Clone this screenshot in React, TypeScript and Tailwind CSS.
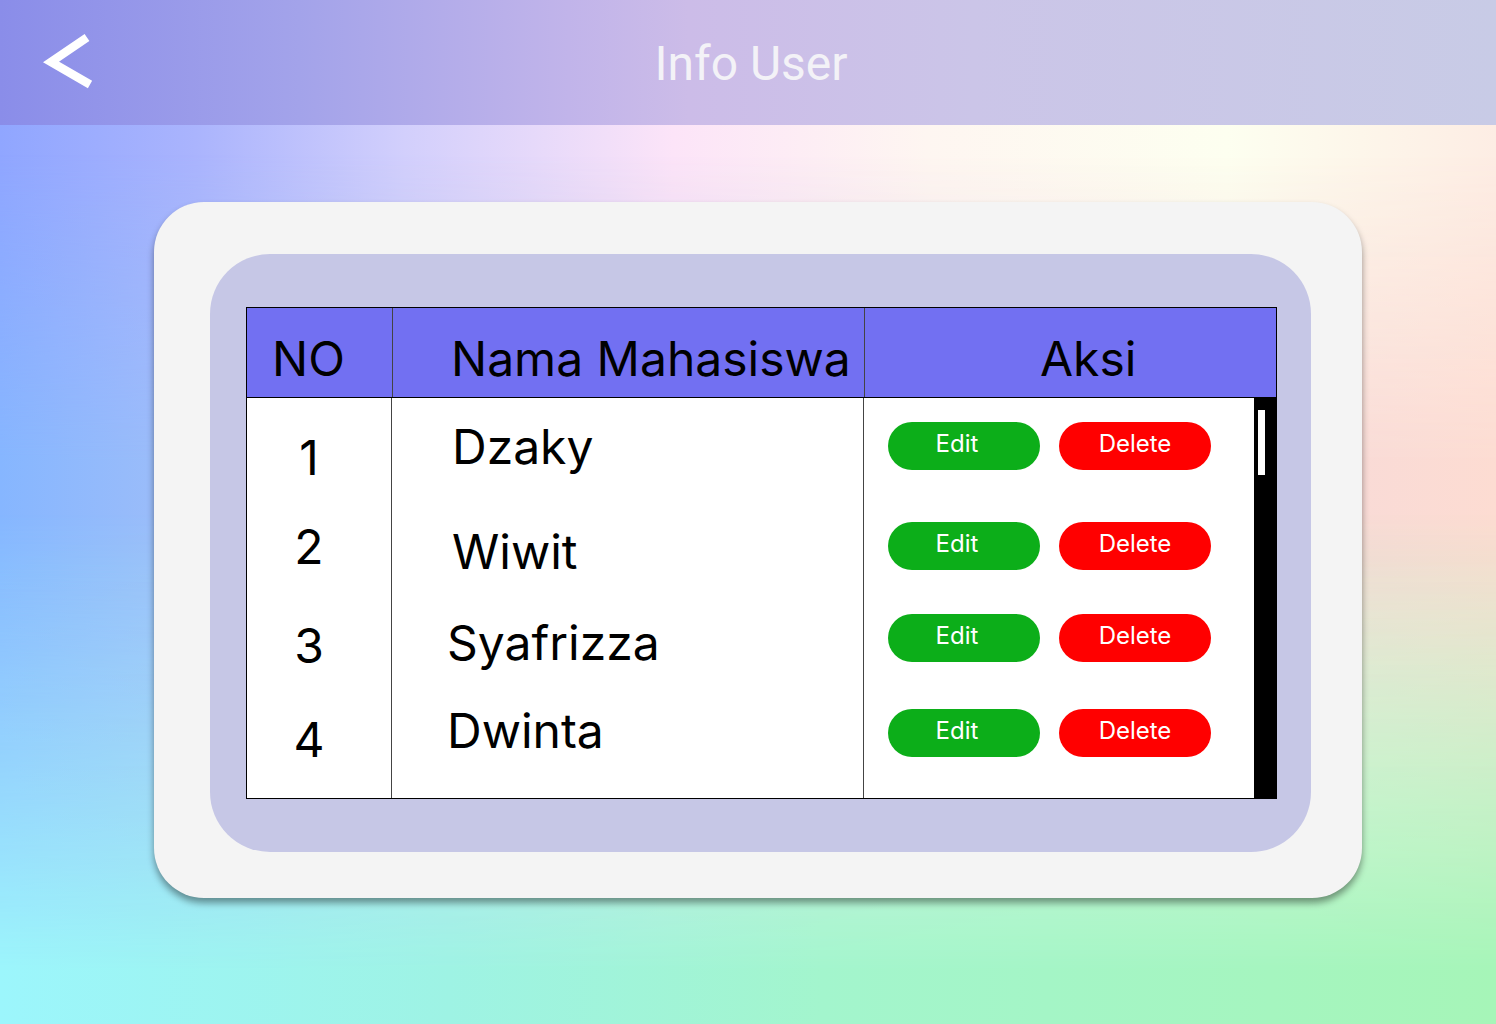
import React from "react";

const students = [
  { no: "1", name: "Dzaky", noCls: "mt-[36px]", nameCls: "mt-[25px] pl-[60px]", btnCls: "mt-[24px]" },
  { no: "2", name: "Wiwit", noCls: "mt-[41px]", nameCls: "mt-[57px] pl-[60px]", btnCls: "mt-[52px]" },
  { no: "3", name: "Syafrizza", noCls: "mt-[51px]", nameCls: "mt-[43px] pl-[55px]", btnCls: "mt-[44px]" },
  { no: "4", name: "Dwinta", noCls: "mt-[46px]", nameCls: "mt-[40px] pl-[55px]", btnCls: "mt-[47px]" },
];

const BackIcon = () => (
  <svg width="60" height="60" viewBox="0 0 60 60" fill="none">
    <polyline
      points="49,4.5 13,29 52,51.5"
      stroke="white"
      strokeWidth="8.5"
      strokeLinejoin="miter"
      strokeLinecap="butt"
    />
  </svg>
);

const App = () => {
  return (
    <div className="relative w-full min-h-screen h-[1024px] overflow-hidden font-['Inter',sans-serif]">
      {/* background mesh */}
      <div className="absolute inset-0 bg-[linear-gradient(to_right,#90a6ff_0%,#aab4fd_13%,#d2cffc_27%,#fce4f8_45%,#fef6f1_62%,#fdfff0_82%,#fdede4_100%)]" />
      <div className="absolute inset-0 bg-[linear-gradient(to_right,#86b6ff_0%,#c0c8f0_30%,#f0d8e0_70%,#fddcd2_100%)] [mask-image:linear-gradient(to_bottom,transparent_15%,black_45%,black_55%,transparent_85%)] [-webkit-mask-image:linear-gradient(to_bottom,transparent_15%,black_45%,black_55%,transparent_85%)]" />
      <div className="absolute inset-0 bg-[linear-gradient(to_right,#9cf6fc_0%,#9ef3e4_30%,#a3f5cd_55%,#a6f5b8_100%)] [mask-image:linear-gradient(to_bottom,transparent_50%,black_95%)] [-webkit-mask-image:linear-gradient(to_bottom,transparent_50%,black_95%)]" />

      <div className="relative z-10">
        {/* header */}
        <header className="h-[125px] grid grid-cols-[1fr_auto_1fr] items-center bg-[linear-gradient(to_right,#8a8de9_0%,#a3a3ea_20%,#c1b4ea_38%,#ccbce8_46%,#cbc5e8_65%,#c8cbe6_100%)]">
          <div className="pl-[38px] flex items-center">
            <BackIcon />
          </div>
          <h1 className="pt-[2px] pl-[6px] text-[48px] leading-none font-normal text-[#f3f2f7] font-['Roboto',sans-serif]">
            Info User
          </h1>
          <div />
        </header>

        {/* card */}
        <div className="ml-[154px] mt-[77px] w-[1208px] h-[696px] rounded-[50px] bg-[#f4f4f4] shadow-[0_5px_7px_rgba(0,0,0,0.4)] pl-[56px] pt-[52px]">
          <div className="w-[1101px] h-[598px] rounded-[60px] bg-[#c6c7e6] pl-[36px] pt-[53px]">
            <div className="w-[1031px] border border-black bg-white flex flex-col text-black">
              {/* head */}
              <div className="flex h-[90px] bg-[#7270f2] border-b border-black text-[48px] leading-[48px]">
                <div className="w-[146px] border-r border-[#444] pl-[25px] pt-[27px]">NO</div>
                <div className="w-[472px] border-r border-[#444] pl-[58px] pt-[27px]">Nama Mahasiswa</div>
                <div className="flex-1 pl-[175px] pt-[27px]">Aksi</div>
              </div>

              {/* body */}
              <div className="flex h-[400px]">
                <div className="w-[145px] border-r border-[#444] flex flex-col text-[48px] leading-[48px]">
                  {students.map((s) => (
                    <div key={s.no} className={`w-[124px] text-center ${s.noCls}`}>
                      {s.no}
                    </div>
                  ))}
                </div>
                <div className="w-[472px] border-r border-[#444] flex flex-col text-[48px] leading-[48px]">
                  {students.map((s) => (
                    <div key={s.no} className={s.nameCls}>
                      {s.name}
                    </div>
                  ))}
                </div>
                <div className="w-[390px] flex flex-col pl-[24px]">
                  {students.map((s) => (
                    <div key={s.no} className={`flex gap-[19px] ${s.btnCls}`}>
                      <button className="w-[152px] h-[48px] rounded-full bg-[#0cae19] text-white text-[24px] leading-none pr-[14px] pb-[4px]">
                        Edit
                      </button>
                      <button className="w-[152px] h-[48px] rounded-full bg-[#ff0000] text-white text-[24px] leading-none pb-[4px]">
                        Delete
                      </button>
                    </div>
                  ))}
                </div>
                <div className="w-[22px] bg-black pl-[4px] pt-[12px]">
                  <div className="w-[7px] h-[65px] bg-white" />
                </div>
              </div>
            </div>
          </div>
        </div>
      </div>
    </div>
  );
};

export default App;
